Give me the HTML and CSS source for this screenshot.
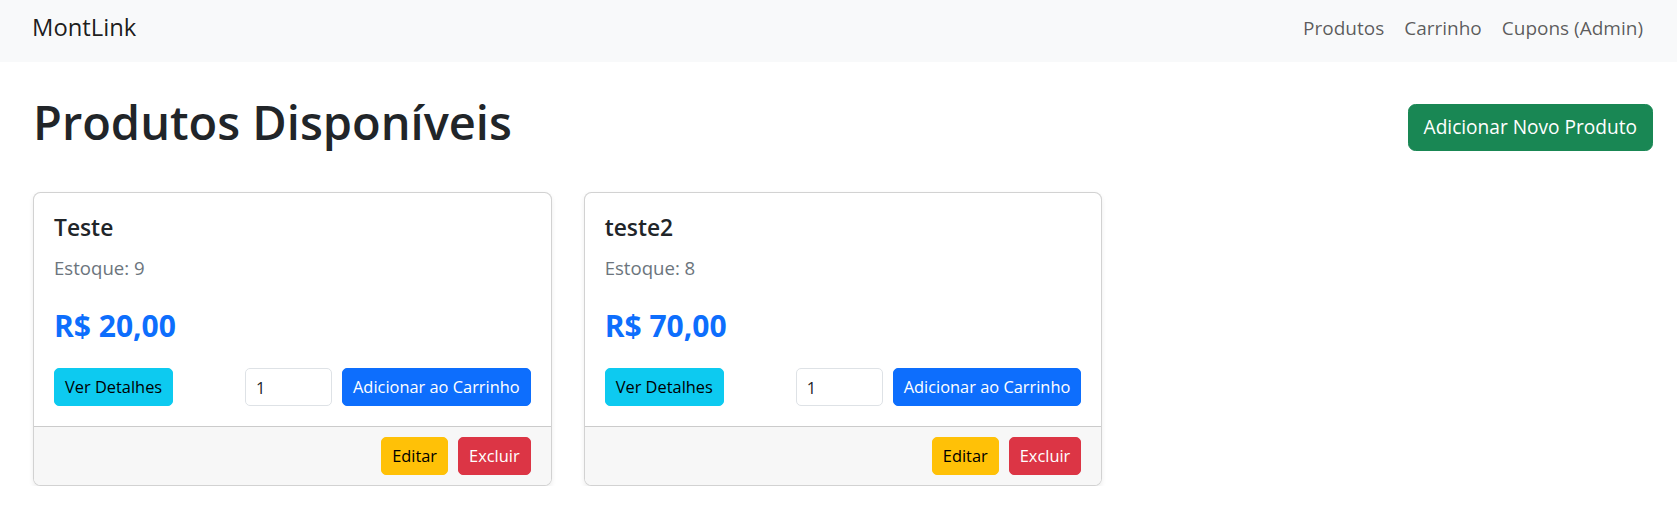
FILE: index.html
```html
<!DOCTYPE html>
<html lang="pt-BR">
<head>
<meta charset="utf-8">
<title>MontLink - Produtos</title>
<link rel="stylesheet" href="styles.css">
</head>
<body>
<nav class="navbar">
  <a class="navbar-brand" href="#">MontLink</a>
  <ul class="navbar-nav">
    <li><a class="nav-link" href="#">Produtos</a></li>
    <li><a class="nav-link" href="#">Carrinho</a></li>
    <li><a class="nav-link" href="#">Cupons (Admin)</a></li>
  </ul>
</nav>

<main class="container">
  <div class="page-header">
    <h1 class="page-title">Produtos Disponíveis</h1>
    <a class="btn btn-success" href="#">Adicionar Novo Produto</a>
  </div>

  <div class="product-grid">
    <div class="card">
      <div class="card-body">
        <h5 class="card-title">Teste</h5>
        <p class="card-stock">Estoque: 9</p>
        <p class="card-price">R$ 20,00</p>
        <div class="card-actions">
          <a class="btn btn-sm btn-info" href="#">Ver Detalhes</a>
          <form class="add-form">
            <input class="qty-input" type="number" value="1" min="1">
            <button class="btn btn-sm btn-primary" type="button">Adicionar ao Carrinho</button>
          </form>
        </div>
      </div>
      <div class="card-footer">
        <a class="btn btn-sm btn-warning" href="#">Editar</a>
        <button class="btn btn-sm btn-danger" type="button">Excluir</button>
      </div>
    </div>

    <div class="card">
      <div class="card-body">
        <h5 class="card-title">teste2</h5>
        <p class="card-stock">Estoque: 8</p>
        <p class="card-price">R$ 70,00</p>
        <div class="card-actions">
          <a class="btn btn-sm btn-info" href="#">Ver Detalhes</a>
          <form class="add-form">
            <input class="qty-input" type="number" value="1" min="1">
            <button class="btn btn-sm btn-primary" type="button">Adicionar ao Carrinho</button>
          </form>
        </div>
      </div>
      <div class="card-footer">
        <a class="btn btn-sm btn-warning" href="#">Editar</a>
        <button class="btn btn-sm btn-danger" type="button">Excluir</button>
      </div>
    </div>
  </div>
</main>
</body>
</html>
```

FILE: styles.css
```css
* {
  box-sizing: border-box;
}

body {
  margin: 0;
  font-family: "Open Sans", "Noto Sans", sans-serif;
  font-size: 18.6px;
  line-height: 30px;
  color: #212529;
  background: #fff;
}

a {
  text-decoration: none;
}

/* Navbar */
.navbar {
  height: 62px;
  padding: 0 24px 7px 33px;
  background: #f8f9fa;
  display: flex;
  align-items: center;
  justify-content: space-between;
}

.navbar-brand {
  font-size: 23.8px;
  line-height: 37px;
  color: rgba(0, 0, 0, 0.9);
  margin-left: -1px;
}

.navbar-nav {
  list-style: none;
  margin: 0;
  padding: 0;
  display: flex;
}

.nav-link {
  display: block;
  padding: 0 10px;
  font-size: 19px;
  line-height: 30px;
  color: rgba(0, 0, 0, 0.65);
}

/* Container */
.container {
  padding: 30px 24px 0 33px;
}

.page-header {
  display: flex;
  align-items: center;
  justify-content: space-between;
  margin-bottom: 30px;
}

.page-title {
  margin: 0 0 10px;
  font-size: 47px;
  line-height: 60px;
  font-weight: 600;
  color: #212529;
}

/* Buttons */
.btn {
  display: inline-block;
  border: 1px solid transparent;
  font-family: inherit;
  font-size: 19.1px;
  line-height: 30px;
  padding: 7.5px 15px;
  border-radius: 7.5px;
  text-align: center;
  cursor: pointer;
  white-space: nowrap;
}

.btn-sm {
  font-size: 16.4px;
  line-height: 26px;
  padding: 5px 10px;
  border-radius: 5px;
}

.btn-success {
  background: #198754;
  border-color: #198754;
  color: #fff;
}

.btn-info {
  background: #0dcaf0;
  border-color: #0dcaf0;
  color: #000;
}

.btn-primary {
  background: #0d6efd;
  border-color: #0d6efd;
  color: #fff;
}

.btn-warning {
  background: #ffc107;
  border-color: #ffc107;
  color: #000;
}

.btn-danger {
  background: #dc3545;
  border-color: #dc3545;
  color: #fff;
}

/* Cards */
.product-grid {
  display: grid;
  grid-template-columns: repeat(3, 1fr);
  column-gap: 32px;
}

.card {
  border: 1px solid rgba(0, 0, 0, 0.175);
  border-radius: 7.5px;
  background: #fff;
  box-shadow: 0 2.5px 5px rgba(0, 0, 0, 0.075);
  overflow: hidden;
}

.card-body {
  padding: 20px;
}

.card-title {
  margin: 0 0 10px;
  font-size: 22.8px;
  line-height: 30px;
  font-weight: 600;
  color: #212529;
}

.card-stock {
  margin: 0 0 20px;
  color: #6c757d;
}

.card-price {
  margin: 0 0 20px;
  font-size: 30px;
  line-height: 45px;
  font-weight: 700;
  color: #0d6efd;
}

.card-actions {
  display: flex;
  align-items: center;
  justify-content: space-between;
}

.add-form {
  display: flex;
  gap: 10px;
  margin: 0;
}

.qty-input {
  width: 87px;
  height: 38px;
  padding: 5px 10px;
  border: 1px solid #dee2e6;
  border-radius: 5px;
  font-family: inherit;
  font-size: 16.4px;
  color: #212529;
  background: #fff;
  -moz-appearance: textfield;
}

.qty-input::-webkit-inner-spin-button,
.qty-input::-webkit-outer-spin-button {
  -webkit-appearance: none;
  margin: 0;
}

.card-footer {
  display: flex;
  justify-content: flex-end;
  gap: 10px;
  padding: 10px 20px;
  background: #f7f7f7;
  border-top: 1px solid rgba(0, 0, 0, 0.175);
}
```
